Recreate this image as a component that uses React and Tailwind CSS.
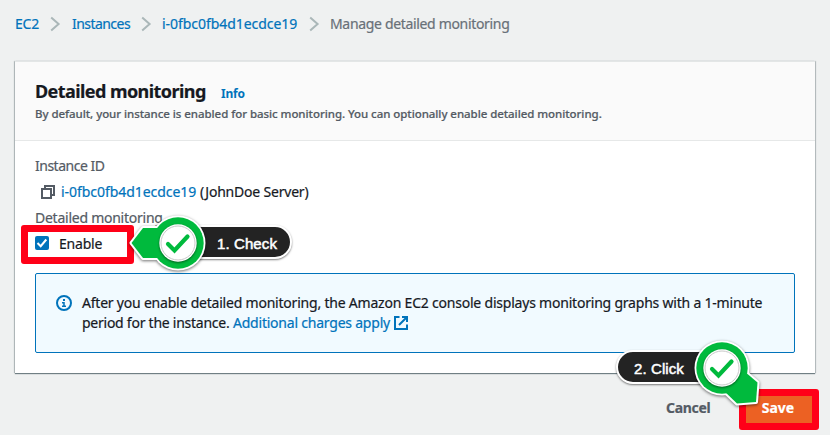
const ember = "font-['Noto_Sans','Open_Sans',sans-serif]";

function Chevron() {
  return (
    <svg className="h-4 w-[11px] shrink-0" viewBox="0 0 11 16" fill="none" stroke="#aab7b8" strokeWidth="2">
      <path d="M1.2 1.5 8.6 8 1.2 14.5" />
    </svg>
  );
}

function CopyIcon() {
  return (
    <svg className="h-4 w-4 shrink-0" viewBox="0 0 16 16" fill="none" stroke="#545b64" strokeWidth="2">
      <path d="M2 5h9v9H2z" />
      <path d="M5 5V2h9v9h-3" />
    </svg>
  );
}

function InfoIcon() {
  return (
    <svg className="h-4 w-4 shrink-0" viewBox="0 0 16 16" fill="none" stroke="#0073bb" strokeWidth="2">
      <circle cx="8" cy="8" r="7" />
      <path d="M8 4v2" />
      <path d="M6 7.700h2v3.600M6 11.300h4" strokeWidth="1.500" />
    </svg>
  );
}

function ExternalIcon() {
  return (
    <svg className="h-4 w-4 shrink-0" viewBox="0 0 16 16" fill="none" stroke="#0073bb" strokeWidth="2">
      <path d="M6.500 2H2v12h12V9.500" />
      <path d="M9 2h5v5M14 2 6 10" />
    </svg>
  );
}

function Badge({ pointer, className }) {
  return (
    <svg className={className} viewBox="-50 -40 100 80" overflow="visible">
      <g className="[filter:drop-shadow(0_1px_1.500px_rgba(0,0,0,0.55))]">
        <path d={pointer} fill="#fff" stroke="#fff" strokeWidth="4" strokeLinejoin="round" />
        <circle r="27.500" fill="#fff" />
      </g>
      <path d={pointer} fill="#00ba3d" />
      <circle r="25.700" fill="#00ba3d" />
      <circle r="18.700" fill="#fff" className="[filter:drop-shadow(0_1px_1px_rgba(0,0,0,0.5))]" />
      <circle r="17" fill="#fff" stroke="#c9c9c9" strokeWidth="1" />
      <path d="M-10 1 -3.500 7.500 9.500 -6.500" fill="none" stroke="#00ba3d" strokeWidth="4.200" strokeLinecap="round" />
    </svg>
  );
}

const pill =
  "absolute flex items-center rounded-full border-2 border-white bg-[#232323] font-['Liberation_Sans',Arial,sans-serif] text-[15px] tracking-[0.1px] pt-[3px] leading-5 text-white shadow-[0_1px_2px_rgba(0,0,0,0.5)] [-webkit-text-stroke:0.5px_white]";

export default function App() {
  return (
    <div className={`relative h-[435px] w-[830px] overflow-hidden bg-[#eff1f1] text-[14px] text-[#16191f] [-webkit-text-stroke:0.2px] ${ember}`}>
      <nav className="flex h-[61px] items-start whitespace-nowrap pl-[15px] pt-[14px] leading-5 text-[#0073bb]">
        <a className="w-[35px] tracking-[-0.2px]">EC2</a>
        <span className="flex h-5 w-[22px] items-center"><Chevron /></span>
        <a className="w-[69px] tracking-[-0.55px]">Instances</a>
        <span className="flex h-5 w-[21px] items-center"><Chevron /></span>
        <a className="w-[147px] tracking-[-0.05px]">i-0fbc0fb4d1ecdce19</a>
        <span className="flex h-5 w-[21px] items-center"><Chevron /></span>
        <span className="tracking-[-0.33px] text-[#687078] [-webkit-text-stroke:0.2px_#687078]">Manage detailed monitoring</span>
      </nav>

      <main className="ml-[15px] h-[312px] w-[800px] border-t border-[#e3e6e6] bg-white shadow-[0_1px_1px_0_rgba(0,28,36,0.5),1px_0_1px_0_rgba(0,28,36,0.18),-1px_0_1px_0_rgba(0,28,36,0.2)]">
        <header className="h-[79px] border-b border-[#e6e8e8] bg-[#fafafa] px-5 pt-[17px]">
          <div className="flex h-[25px] items-baseline gap-[15px] whitespace-nowrap">
            <h1 className="w-[171px] text-[18px] font-bold leading-6 tracking-[-0.57px]">Detailed monitoring</h1>
            <a className="text-[12px] font-bold tracking-[-0.2px] text-[#0073bb] [-webkit-text-stroke:0]">Info</a>
          </div>
          <p className="whitespace-nowrap pt-px text-[11.500px] font-medium leading-[18px] tracking-[-0.06px] text-[#545b64] [-webkit-text-stroke:0.2px]">
            By default, your instance is enabled for basic monitoring. You can optionally enable detailed monitoring.
          </p>
        </header>

        <section className="px-5 pt-[15px]">
          <div className="h-[25px] whitespace-nowrap leading-5 tracking-[-0.5px] text-[#545b64]">Instance ID</div>
          <div className="flex h-[26px] items-start whitespace-nowrap pl-[5px] leading-[22px]">
            <span className="flex h-[22px] w-[21px] items-center"><CopyIcon /></span>
            <a className="w-[139px] tracking-[-0.05px] text-[#0073bb]">i-0fbc0fb4d1ecdce19</a>
            <span className="tracking-[-0.2px]">(JohnDoe Server)</span>
          </div>
          <div className="h-[26px] whitespace-nowrap leading-[22px] tracking-[-0.25px] text-[#545b64]">Detailed monitoring</div>
          <label className="flex h-5 items-center gap-[10px]">
            <span className="flex h-[14px] w-[14px] items-center justify-center rounded-[2px] bg-[#0073bb]">
              <svg className="h-[14px] w-[14px]" viewBox="0 0 14 14" fill="none" stroke="#fff" strokeWidth="2">
                <path d="M2.500 7 5.700 10.200 11.300 3.500" />
              </svg>
            </span>
            <span className="tracking-[-0.2px]">Enable</span>
          </label>
          <div className="mt-[20px] flex h-[80px] w-[760px] gap-[10px] rounded-[2px] border border-[#0073bb] bg-[#f1faff] pl-5 pt-[19px]">
            <span className="flex h-5 items-center"><InfoIcon /></span>
            <div className="whitespace-nowrap leading-5">
              <p className="tracking-[-0.21px]">After you enable detailed monitoring, the Amazon EC2 console displays monitoring graphs with a 1-minute</p>
              <p className="flex">
                <span className="w-[151px] tracking-[-0.25px]">period for the instance.</span>
                <a className="w-[160px] tracking-[-0.22px] text-[#0073bb]">Additional charges apply</a>
                <span className="flex h-5 items-center"><ExternalIcon /></span>
              </p>
            </div>
          </div>
        </section>
      </main>

      <footer className="flex h-[61px] items-start pl-[666px] pt-[22px] font-bold">
        <button className="h-[26px] w-[80px] text-left leading-6 tracking-[-0.3px] text-[#545b64]">Cancel</button>
        <button className="h-[29px] w-[66px] bg-[#ec6123] pb-[3px] pr-[2px] leading-6 text-white">Save</button>
      </footer>

      <div className="absolute left-[21px] top-[225px] h-[39px] w-[113px] rounded-[3px] border-[7px] border-[#ff0018]" />
      <div className="absolute left-[739px] top-[389px] h-[41px] w-[80px] rounded-[3px] border-[7px] border-[#ff0018]" />

      <div className={`${pill} left-[178px] top-[225px] h-[34px] w-[114px] pl-[37px]`}>1. Check</div>
      <Badge className="absolute left-[128px] top-[203px] h-[80px] w-[100px]" pointer="M-46.500 0 -35 -15H0V15H-35Z" />

      <div className={`${pill} left-[616px] top-[350px] h-[34px] w-[114px] pl-[16px]`}>2. Click</div>
      <Badge className="absolute left-[671.5px] top-[328px] h-[80px] w-[100px]" pointer="M22 3 35.500 14.500 34 34 15 35.500 0 21Z" />
    </div>
  );
}
